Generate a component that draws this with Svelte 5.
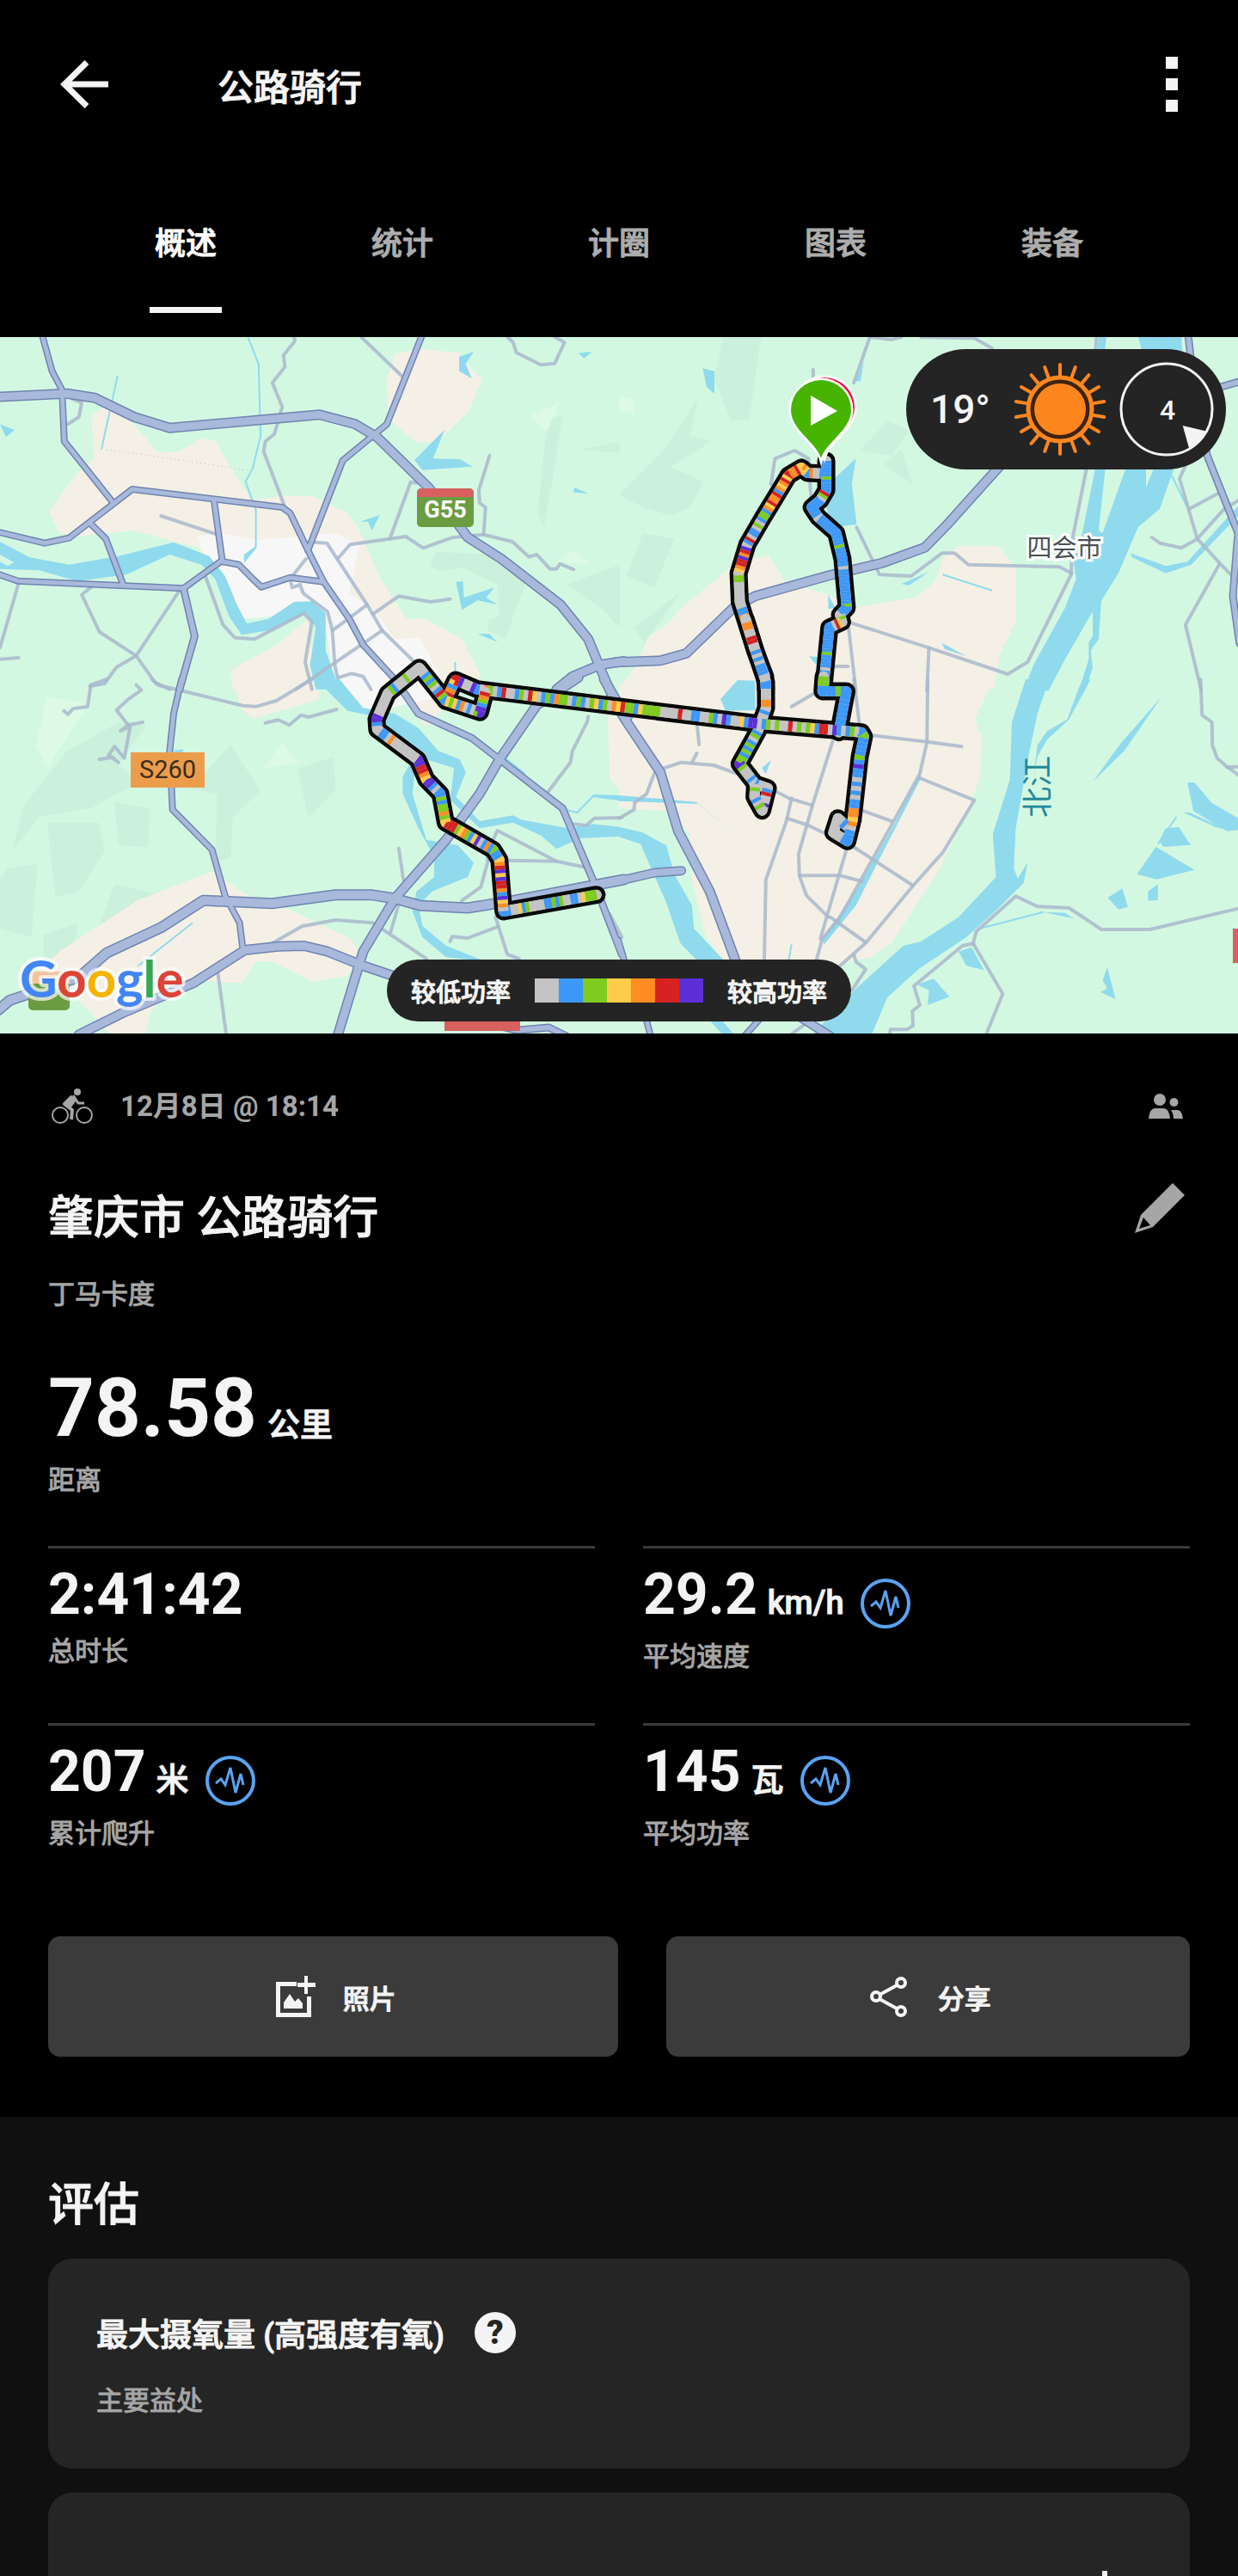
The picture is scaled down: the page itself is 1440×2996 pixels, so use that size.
<script lang="ts">
	type Line = { width: number; points: string };

	type Tile = {
		x: number;
		y: number;
		sand: string[];
		city: string[];
		shade: string[];
		light: string[];
		water: string[];
		streams: string[];
		minor: string[];
		major: Line[];
	};

	type Leg = { x: number; y: number; scale: number; points: string; mix: string };

	const palette = ['#c4c4c4', '#3c98f8', '#7ecc1e', '#ffcc4a', '#ff8d24', '#d62222', '#5c30d8'];

	const tabs = ['概述', '统计', '计圈', '图表', '装备'];
	let activeTab = $state('概述');

	const stats = [
		{ value: '2:41:42', unit: '', label: '总时长', sensor: false },
		{ value: '29.2', unit: 'km/h', label: '平均速度', sensor: true },
		{ value: '207', unit: '米', label: '累计爬升', sensor: true },
		{ value: '145', unit: '瓦', label: '平均功率', sensor: true }
	];

	const rays = Array.from({ length: 18 }, (_, i) => i * 20);

	// tile points are stored in tile units, 1568 across and three per map unit down
	const TILE_X = 720 / 1568;
	const TILE_Y = 1 / 3;

	const project = (points: string, x: number, y: number, scale = TILE_X) =>
		points
			.split(' ')
			.map((pair) => {
				const [px, py] = pair.split(',').map(Number);
				return `${(x + px * scale).toFixed(1)},${(y + py * TILE_Y).toFixed(1)}`;
			})
			.join(' ');

	const tiles: Tile[] = [
		{
			x: 0,
			y: -2,
			sand: [
				'1000,65 1060,48 1160,60 1220,155 1190,260 1110,370 1055,375 985,290 980,160',
				'232,280 270,245 340,310 395,405 450,408 510,360 545,370 620,540 640,575 720,560 790,560 880,620 910,680 960,840 1030,990 1080,990 1170,1060 1215,1180 1205,1235 860,1235 820,980 600,980 560,830 500,740 340,682 200,700 150,690 125,615 190,490 238,430',
				'583,1170 700,1080 780,990 800,1235 590,1235'
			],
			city: [
				'500,700 560,690 650,715 850,690 910,730 885,900 950,960 1000,1060 1065,1055 1110,1180 1110,1235 850,1235 820,980 780,930 740,935 690,980 610,990 590,890 560,820 520,790'
			],
			shade: [
				'1390,290 1425,280 1400,500 1378,670 1362,620 1375,430',
				'1470,400 1570,370 1570,410',
				'1105,755 1260,765 1330,870 1280,1060 1235,1030 1235,995 1265,980 1260,870 1170,810 1120,825 1090,805',
				'1435,870 1570,800 1570,1020 1530,960'
			],
			light: ['1340,280 1418,235 1385,335', '1410,790 1455,750 1500,800'],
			water: [
				'0,720 75,775 175,800 300,770 440,722 530,770 570,840 600,940 625,1005 680,990 745,930 790,928 825,970 825,1100 860,1235 800,1235 785,1150 800,1020 775,970 680,1030 612,1045 580,980 545,850 510,800 430,765 320,835 195,858 100,820 0,815 0,790 20,805 35,792 0,765',
				'1163,75 1200,57 1180,100 1195,150 1163,125',
				'1465,62 1500,57 1480,80',
				'1127,328 1097,430 1165,432 1197,458 1070,470 1050,435',
				'0,310 37,330 15,355',
				'1455,530 1490,552 1453,548',
				'912,650 962,627 942,682 932,650',
				'1155,860 1173,858 1175,915 1252,880 1232,915 1260,940 1210,925 1170,958',
				'1210,1042 1240,1042 1260,1070',
				'618,765 648,735 648,745 618,795'
			],
			streams: [
				'628,6 655,100 660,350 640,465 622,510 648,610 648,740',
				'298,140 257,398',
				'1153,1140 1153,1180'
			],
			minor: [
				'745,6 747,20 718,70 722,110 690,165 715,250 695,345 672,370 668,405 722,600',
				'915,6 1020,145',
				'1285,6 1300,25 1308,60 1370,103 1405,98 1430,25 1405,6',
				'180,220 207,235 200,285 172,310',
				'408,630 550,695',
				'1240,420 1213,540 1215,585 1230,600 1225,695',
				'1055,515 1040,512 988,708',
				'855,780 887,730 1028,702 1072,742 1145,706 1225,695 1298,720 1340,773 1360,765 1393,815 1410,815 1418,797 1453,817',
				'798,722 828,725 930,940 968,1030 1050,1140',
				'775,780 735,850 740,880 760,870 768,900 830,965 842,1030 848,1150 855,1195 890,1180 920,1190 940,1235',
				'842,1030 930,940',
				'750,1235 968,1030',
				'945,972 1010,910 1090,930 1140,920',
				'520,840 565,1010 595,1055 645,1060 770,970 790,1000 773,1140 790,1235',
				'230,880 207,905 252,1035 345,1118 455,890',
				'228,1225 265,1215 295,1158 345,1118 392,1210 430,1235',
				'47,865 0,1090',
				'0,1130 47,1125'
			],
			major: [
				{ width: 8, points: '107,0 132,125 157,190 163,370 287,585' },
				{ width: 8, points: '542,575 563,785' },
				{ width: 8, points: '228,655 268,710 312,870' },
				{ width: 8, points: '1069,0 980,310 868,437 780,750' },
				{
					width: 8,
					points:
						'-5,686 113,725 175,707 335,537 715,600 735,620 780,750 820,860 885,990 920,1080 1000,1200 1010,1235'
				},
				{
					width: 8,
					points: '-5,833 45,857 465,883 560,788 605,800 640,850 662,878 735,845 820,860'
				},
				{ width: 9, points: '465,883 493,1050 455,1235' },
				{
					width: 12,
					points:
						'-5,215 170,203 240,218 340,285 430,323 810,277 900,310 955,355 1085,530 1150,640 1185,705 1270,780 1420,940 1490,1060 1520,1160 1545,1240'
				},
				{ width: 12, points: '1410,1235 1450,1190 1520,1150 1580,1137' }
			]
		},
		{
			x: 720,
			y: -2,
			sand: [
				'0,1235 40,1160 75,1050 130,1000 150,960 300,790 380,768 420,860 520,900 600,950 750,915 800,860 820,780 860,735 960,735 1005,810 1005,1000 965,1110 950,1235'
			],
			city: [],
			shade: [
				'265,6 360,6 330,295 285,300 240,150',
				'0,555 120,390 200,215 180,350 235,370 130,460 215,510 180,600 130,630 60,600',
				'60,690 140,710 90,880 20,840',
				'610,400 680,300 735,330 690,420',
				'670,450 715,400 745,525',
				'40,1020 160,890 65,1075'
			],
			light: ['0,215 40,220 35,275 0,260'],
			water: [
				'1315,6 1425,6 1428,80 1330,80',
				'1215,6 1235,6 1228,80 1210,80',
				'1210,440 1234,440 1215,680 1225,690 1290,440 1335,440 1335,530 1362,440 1412,440 1370,605 1315,670 1265,830 1220,930 1195,975 1130,1130 1088,1240 1025,1240 1050,1150 1130,950 1158,850 1150,780 1172,700',
				'1295,760 1385,805 1440,790 1575,585 1575,620 1450,800 1385,830 1300,775',
				'1200,930 1222,920 1215,1060 1195,1100 1200,1160 1180,1240 1165,1240 1190,1130 1190,1070 1200,1050',
				'600,430 590,520 602,660 540,670 525,600 545,500',
				'212,115 242,125 242,205 222,180',
				'715,868 785,825 735,872',
				'530,905 548,950 530,955',
				'818,1073 880,1120 825,1095',
				'482,1120 530,1125 505,1160',
				'620,90 612,160 600,160',
				'300,1205 345,1215 345,1240 285,1235'
			],
			streams: ['1400,490 1440,600', '820,835 945,890'],
			minor: [
				'637,0 595,165',
				'637,6 690,15 715,6',
				'765,6 900,10 945,45',
				'1210,0 1185,460 1150,700 1145,830',
				'492,120 492,200',
				'385,520 395,430 445,402 480,430 485,540 490,590',
				'602,670 660,835 740,840 818,760 850,760 885,800 1115,808 1147,830 1035,1140 985,1182 785,1090 580,1000',
				'785,1090 780,1240',
				'580,1000 600,1240',
				'545,1155 580,1155',
				'1440,440 1420,500 1465,710 1525,800 1575,870',
				'1445,605 1520,550',
				'1350,705 1370,725 1425,742 1465,710 1530,610 1575,570',
				'1520,800 1435,1010 1475,1240'
			],
			major: [
				{
					width: 12,
					points:
						'-8,1141 105,1135 170,1110 290,950 345,910 540,835 665,795 775,740 835,655 975,440'
				},
				{ width: 9, points: '1442,0 1450,100 1490,420 1568,690 1555,910 1572,1075' },
				{ width: 9, points: '1500,190 1580,158' }
			]
		},
		{
			x: 0,
			y: 398,
			sand: [
				'590,0 800,0 810,70 640,138 610,100',
				'100,1020 150,950 350,770 540,670 620,750 720,795 890,905 910,960 880,1035 790,1055 690,985 650,985 610,1060 470,1050 380,1160 370,1240 280,1240 200,1120',
				'1020,0 1210,0 1160,60 1080,165 1040,100',
				'1540,130 1570,130 1570,390 1545,350'
			],
			city: ['850,0 1110,0 1090,70 1020,90 930,120 880,60'],
			shade: [
				'30,600 60,440 170,250 300,150 370,160 300,300 350,360 230,450 100,480',
				'120,500 250,500 265,600 200,740 140,760',
				'290,430 380,450 375,585 300,580',
				'585,230 660,390 590,480 585,620 545,640 550,400 480,380',
				'755,310 845,270 850,385 780,485',
				'20,660 95,645 80,900 0,870 0,700',
				'290,715 400,750 240,900',
				'110,890 200,850 185,940 110,1000'
			],
			light: ['120,60 225,85 120,310 90,230', '665,315 715,220 755,290'],
			water: [
				'800,0 860,0 920,100 1000,120 1060,170 1110,250 1165,280 1180,325 1155,410 1215,495 1300,475 1320,490 1440,520 1500,505 1570,515 1570,548 1470,555 1410,592 1370,545 1300,500 1215,520 1140,420 1150,310 1080,280 1050,330 1045,400 1080,560 1160,580 1200,640 1185,690 1095,740 1060,790 1070,860 1130,930 1230,985 1130,970 1070,900 1045,810 1055,740 1100,690 1100,620 1060,520 1020,400 1020,340 1040,290 960,180 950,130 880,110',
				'1500,402 1570,405 1570,424 1505,412',
				'440,248 465,245 455,275'
			],
			streams: ['1435,455 1462,466 1505,404', '488,850 350,1000', '1275,270 1330,330'],
			minor: [
				'270,0 230,20 222,95 185,103 172,122 162,110',
				'345,20 358,38 325,70 295,108 325,160 362,150',
				'325,160 305,180 330,165 315,275 290,235 275,265 300,290 285,272 252,280',
				'385,0 400,20 475,45 615,92 650,95 700,75 790,0',
				'672,152 705,142 733,160 762,125 782,132 853,105',
				'1490,130 1487,150 1450,250 1445,290 1387,395',
				'1010,590 1022,700',
				'1478,655 1410,635 1285,632',
				'1410,635 1260,528 1235,600 1235,640 1218,725 1170,772',
				'685,925 765,862 850,840 945,850 1080,975',
				'1015,760 990,880',
				'1140,915 1145,898 1185,903 1262,863',
				'1255,830 1285,960 1315,975',
				'552,1025 573,1240',
				'1450,505 1485,510 1505,485 1575,483',
				'1545,820 1575,900'
			],
			major: [
				{ width: 8, points: '460,0 440,120 430,250 437,455 537,595 570,755 607,850 615,940' },
				{ width: 9, points: '1000,0 1060,120 1195,205 1275,290 1425,450 1505,710 1575,960' },
				{ width: 13, points: '-5,1155 25,1120 200,1040 270,955 410,865 515,772 690,782 850,752 940,752 1000,765 1065,790 1185,798 1290,775 1580,699' },
				{ width: 12, points: '200,1240 310,1165 490,1060 620,945 705,932 770,930 830,950 920,1000 1050,1060' },
				{ width: 12, points: '1465,-6 1360,90 1265,280 1215,400 1130,560 1000,765 920,950 855,1245' },
				{ width: 12, points: '1530,0 1568,90 1590,130' },
				{ width: 9, points: '1200,1190 1310,1225 1390,1215 1435,1245' }
			]
		},
		{
			x: 720,
			y: 398,
			sand: [
				'0,20 40,0 950,0 900,140 918,200 915,340 880,470 800,690 690,920 640,970 560,990 540,1150 300,1150 265,980 220,900 185,700 180,540 130,460 0,450'
			],
			city: [],
			shade: [],
			light: [],
			water: [
				'1030,0 1090,0 1060,120 1040,250 1005,520 1000,660 1010,695 1035,640 1025,710 960,800 880,900 760,1010 680,1110 640,1240 490,1240 600,1080 720,930 765,915 860,830 955,690 947,540 990,350 995,150',
				'1175,0 1195,0 1140,140 1085,210 1060,270 1050,340 1060,230 1085,180 1135,140 1165,30',
				'0,515 60,535 120,580 140,680 185,790 190,870 265,980 200,985 155,920 120,780 75,640 55,575 0,550',
				'230,1190 260,1190 292,1240 262,1240',
				'0,405 195,428 335,580 200,435 0,425',
				'300,3 345,5 345,108 270,110 257,70',
				'362,310 385,282 372,330',
				'762,330 765,345 655,640 600,790 520,925 515,905 600,740 700,500',
				'1375,60 1280,250 1200,358 1270,225',
				'1440,360 1458,360 1500,430 1575,490 1575,525 1540,530 1455,460',
				'1430,465 1445,465 1540,525 1510,515',
				'1385,520 1418,516 1448,578 1380,585 1368,565',
				'1360,585 1458,665 1362,698 1312,680',
				'1275,730 1289,795 1265,803 1238,762',
				'1365,715 1365,770 1340,773 1340,740',
				'1075,812 1130,815 1152,835',
				'860,950 893,935 925,1015 880,1000',
				'755,1065 797,1045 837,1108 782,1137 785,1085',
				'1237,1005 1258,1117 1220,1092 1237,1078 1225,1050'
			],
			streams: ['920,868 1075,812', '1412,480 1365,575', '437,925 430,980'],
			minor: [
				'595,0 612,190',
				'782,0 780,220 762,330 690,510 560,830 515,905 500,980',
				'635,195 780,218 868,235',
				'500,45 437,95',
				'762,345 900,422 820,605 745,720 625,920 560,1000',
				'600,590 745,720',
				'545,200 490,440 455,610 457,685 475,755 530,830',
				'457,685 560,685 615,705',
				'575,600 510,905',
				'535,830 625,918',
				'198,160 203,228',
				'197,258 185,290',
				'0,485 38,455 40,430 70,400 92,320 158,290 240,300 340,350 430,415 490,440',
				'437,415 425,490 372,700 368,980',
				'425,485 480,510 600,590',
				'610,455 690,495',
				'1473,0 1477,125 1502,150 1503,230 1515,275 1540,305 1575,340',
				'1540,307 1575,305',
				'1575,798 1345,873 1222,873 1140,798 1060,793 1005,757 905,880 897,922 972,1097 930,1240',
				'897,922 870,930 747,1070 762,1137 743,1158 745,1208 730,1222 688,1222 685,1240',
				'595,960 600,985 625,1012 590,1085',
				'475,1200 435,1240'
			],
			major: [
				{ width: 12, points: '-20,60 20,150 105,325 150,530 230,740 300,1000' },
				{ width: 11, points: '-20,710 90,675 158,668' },
				{ width: 8, points: '-2,910 12,975' },
				{ width: 8, points: '68,1180 80,1245' },
				{ width: 8, points: '360,1180 318,1245' },
				{ width: 11, points: '460,1180 535,1245' }
			]
		}
	];

	const VIEW_X = 640 / 1568;

	const legs: Leg[] = [
		{
			x: 720,
			y: -2,
			scale: TILE_X,
			points: '516,482 478,480 462,462 430,488 405,545 365,635 325,730 303,830 306,930 345,1100 370,1190 372,1235',
			mix: '1004134354453543415445341221020110510654655430220000000011441003005105500110101011'
		},
		{
			x: 720,
			y: -2,
			scale: TILE_X,
			points: '525,438 525,540 510,575 488,600 505,635 550,690 566,780 577,950 560,975 565,1000 533,1020 520,1200 518,1235',
			mix: '1111121111520111111101111111111121111110111111111112111020350111111111211110111222'
		},
		{
			x: 400,
			y: 328,
			scale: VIEW_X,
			points: '1367,200 1364,252 1432,252 1410,395',
			mix: '22111121111111116'
		},
		{
			x: 400,
			y: 328,
			scale: VIEW_X,
			points: '1145,0 1170,100 1203,220 1203,310 1180,390 1128,505 1172,575 1208,590 1192,668 1170,620 1172,575',
			mix: '0440055001010111001100044010010012012121226200010100015006002010020'
		},
		{
			x: 400,
			y: 328,
			scale: VIEW_X,
			points: '290,285 318,213 380,245 1180,365 1475,395 1482,410 1470,480 1450,700 1435,775 1395,745 1408,695 1430,720',
			mix: '354135600610420150012053012142201210231204352213222200005001100210610031660120200502023155061012012111121611010101144340111100000001'
		},
		{
			x: 400,
			y: 328,
			scale: VIEW_X,
			points: '720,962 455,1020 443,840 425,805 290,710 275,610 235,560 210,490 95,385 93,350 125,260 215,170 290,285 388,325 403,255',
			mix: '222301100212110000213001104361455636543112141063124325553242212110166345566000000004011001660000000210002000000121201521323140102661245'
		}
	];
</script>

<main class="page">
	<header class="header">
		<div class="header__bar">
			<button class="icon-button" aria-label="返回">
				<svg width="56" height="56" viewBox="0 0 56 56" fill="none" stroke="currentColor" stroke-width="7">
					<path d="M56 28H6M31 2.500L5 28l26 25.500" />
				</svg>
			</button>
			<h1 class="header__title">公路骑行</h1>
			<button class="icon-button" aria-label="更多">
				<svg width="14" height="64" viewBox="0 0 14 64" fill="currentColor">
					<path d="M0 0h14v14H0zM0 25h14v14H0zM0 50h14v14H0z" />
				</svg>
			</button>
		</div>
		<nav class="tabs">
			{#each tabs as tab}
				<button class="tabs__item" class:tabs__item--active={tab === activeTab} onclick={() => (activeTab = tab)}>
					{tab}
				</button>
			{/each}
		</nav>
	</header>

	<section class="map">
		<svg class="map__canvas" viewBox="0 0 1440 810" role="img" aria-label="路线地图">
			<rect width="1440" height="810" fill="#d3f8e2" />
			{#each tiles as tile}
				{#each tile.shade as points}<polygon class="shade" points={project(points, tile.x, tile.y)} />{/each}
				{#each tile.light as points}<polygon class="light" points={project(points, tile.x, tile.y)} />{/each}
				{#each tile.sand as points}<polygon class="sand" points={project(points, tile.x, tile.y)} />{/each}
			{/each}
			{#each tiles as tile}
				{#each tile.city as points}<polygon class="city" points={project(points, tile.x, tile.y)} />{/each}
			{/each}
			{#each tiles as tile}
				{#each tile.water as points}<polygon class="water" points={project(points, tile.x, tile.y)} />{/each}
				{#each tile.streams as points}<polyline class="stream" points={project(points, tile.x, tile.y)} />{/each}
			{/each}
			<polyline class="border" points={project('270,400 410,425 630,472', 0, -2)} />
			{#each tiles as tile}
				{#each tile.minor as points}<polyline class="minor" points={project(points, tile.x, tile.y)} />{/each}
			{/each}
			{#each tiles as tile}
				{#each tile.major as road}
					<polyline class="casing" stroke-width={road.width} points={project(road.points, tile.x, tile.y)} />
				{/each}
			{/each}
			{#each tiles as tile}
				{#each tile.major as road}
					<polyline class="major" stroke-width={road.width - 3} points={project(road.points, tile.x, tile.y)} />
				{/each}
			{/each}

			<rect x="485" y="176" width="66" height="45" rx="5" fill="#6b9c41" />
			<path d="M485 186v-5a5 5 0 0 1 5-5h56a5 5 0 0 1 5 5v5z" fill="#d8605f" />
			<text class="badge badge--light" x="518" y="210">G55</text>
			<rect x="152" y="483" width="86" height="41" fill="#ec9d4c" />
			<text class="badge" x="195" y="513">S260</text>
			<rect x="33" y="738" width="48" height="45" rx="5" fill="#6b9c41" />
			<path d="M33 752v-9a5 5 0 0 1 5-5h38a5 5 0 0 1 5 5v9z" fill="#f3c39e" />
			<rect x="517" y="780" width="88" height="27" fill="#d8605f" />
			<rect x="1434" y="688" width="10" height="40" fill="#d8605f" />
			<text class="place" x="1238" y="256">四会市</text>
			<text class="river" transform="translate(1220 523) rotate(-90)">北江</text>

			{#each legs as leg}
				<polyline class="route-edge" points={project(leg.points, leg.x, leg.y, leg.scale)} />
			{/each}
			{#each legs as leg}
				{@const points = project(leg.points, leg.x, leg.y, leg.scale)}
				<polyline class="route" stroke={palette[0]} {points} />
				{#each leg.mix as power, i}
					<polyline
						class="route-step"
						stroke={palette[Number(power)]}
						pathLength={leg.mix.length}
						stroke-dasharray="1 {leg.mix.length * 2}"
						stroke-dashoffset={-i}
						{points}
					/>
				{/each}
			{/each}

			<g stroke="#fff" stroke-width="5" paint-order="stroke">
				<path d="M959 138c-5-17-35-32-35-56a35 35 0 0 1 70 0c0 24-30 39-35 56z" fill="#e8113a" />
				<path d="M955 141c-5-18-35-33-35-56a35 35 0 0 1 70 0c0 23-30 38-35 56z" fill="#46b400" />
			</g>
			<path d="M943 68v35l31-17z" fill="#fff" />

			<text class="google" x="23" y="768"
				><tspan fill="#4285f4">G</tspan><tspan fill="#db4437">o</tspan><tspan fill="#f4b400">o</tspan><tspan
					fill="#4285f4">g</tspan
				><tspan fill="#34a853">l</tspan><tspan fill="#db4437">e</tspan></text
			>
		</svg>

		<div class="weather">
			<span class="weather__temp">19°</span>
			<svg width="110" height="110" viewBox="-55 -55 110 110" fill="none" stroke="#ff861e">
				<circle r="32" stroke="#3d2410" stroke-width="5" />
				<circle r="30" fill="#ff861e" stroke="none" />
				<circle r="37" stroke-width="5" />
				{#each rays as angle}
					<path d="M0-38v-14" stroke-width="4" stroke-linecap="round" transform="rotate({angle})" />
				{/each}
			</svg>
			<svg width="110" height="110" viewBox="-55 -55 110 110">
				<circle r="53" fill="none" stroke="#f4f4f4" stroke-width="3" />
				<path d="M18.700 19L46 25.500A53 53 0 0 1 26 45z" fill="#f4f4f4" />
				<text class="weather__wind" x="1" y="12">4</text>
			</svg>
		</div>

		<div class="legend">
			<span>较低功率</span>
			<div class="legend__scale">
				{#each palette as color}
					<i style="background: {color}"></i>
				{/each}
			</div>
			<span>较高功率</span>
		</div>
	</section>

	<section class="summary">
		<div class="meta">
			<svg width="56" height="48" viewBox="0 0 56 48" fill="none" stroke="currentColor">
				<circle cx="14" cy="34" r="9" stroke-width="2" />
				<circle cx="42" cy="34" r="9" stroke-width="2" />
				<circle cx="34" cy="7" r="4" fill="currentColor" stroke="none" />
				<path d="M28 12l-9 9 9 7-1 11" stroke-width="4" stroke-linejoin="round" />
				<path d="M29 11l6 9h7" stroke-width="3" stroke-linejoin="round" />
				<path d="M30 12l-11 10 7 4 6-8z" fill="currentColor" stroke="none" />
			</svg>
			<time class="meta__date">12月8日 @ 18:14</time>
			<svg class="meta__people" width="40" height="30" viewBox="0 0 40 30" fill="currentColor">
				<circle cx="13" cy="7" r="7" />
				<path d="M0 29c1-8 3-12 8-12h9c5 0 7 4 8 12z" />
				<circle cx="29.500" cy="10" r="5" />
				<path d="M26 19h7c4 0 6 3 7 10H29c0-4-1-7-3-10z" />
			</svg>
		</div>

		<div class="title">
			<h2 class="title__text">肇庆市 公路骑行</h2>
			<button class="icon-button title__edit" aria-label="编辑">
				<svg width="58" height="58" viewBox="0 0 58 58" fill="currentColor" fill-rule="evenodd">
					<path d="M44 0l14 14-37 37L0 58l7-21zM10 40L5 53l13-4z" />
				</svg>
			</button>
		</div>
		<p class="author">丁马卡度</p>

		<div class="distance">
			<p class="value value--large">78.58<small>公里</small></p>
			<p class="label">距离</p>
		</div>

		<div class="stats">
			{#each stats as stat}
				<div class="stats__item">
					<div class="stats__row">
						<p class="value">
							{stat.value}{#if stat.unit}<small>{stat.unit}</small>{/if}
						</p>
						{#if stat.sensor}
							<svg class="stats__icon" width="58" height="58" viewBox="0 0 58 58" fill="none" stroke="#5aa3f2">
								<circle cx="29" cy="29" r="27" stroke-width="4" />
								<path d="M12 32l6-5 5 7 6-20 6 29 6-22 3 13" stroke-width="3" />
							</svg>
						{/if}
					</div>
					<p class="label">{stat.label}</p>
				</div>
			{/each}
		</div>

		<div class="actions">
			<button class="actions__button actions__button--wide">
				<svg width="56" height="56" viewBox="0 0 56 56" fill="currentColor">
					<path d="M6 11h24v5H11v31h31V28h5v24H6z" />
					<path d="M39 4h4v8h9v5h-9v8h-4v-8h-8v-5h8z" />
					<path d="M15 42V35l7-10 6 9 4-4 5 6v6z" />
				</svg>
				照片
			</button>
			<button class="actions__button">
				<svg width="56" height="56" viewBox="0 0 56 56" fill="none" stroke="currentColor" stroke-width="4">
					<path d="M16 26L38 14M16 31l22 12" />
					<circle cx="12" cy="28" r="5" />
					<circle cx="41" cy="12" r="5" />
					<circle cx="41" cy="45" r="5" />
				</svg>
				分享
			</button>
		</div>
	</section>

	<section class="review">
		<h2 class="review__title">评估</h2>
		<article class="card">
			<div class="card__head">
				<h3 class="card__title">最大摄氧量 (高强度有氧)</h3>
				<button class="card__help" aria-label="帮助">?</button>
			</div>
			<p class="card__note">主要益处</p>
		</article>
		<article class="card card--next">
			<svg width="6" height="6" viewBox="0 0 6 6"><rect width="6" height="6" fill="#f4f4f4" /></svg>
		</article>
	</section>
</main>

<style>
	:global(body) {
		background: #101010;
	}
	.page {
		overflow: hidden;
		background: #000;
		color: #f4f4f4;
		font-family: Roboto, 'Noto Sans CJK SC', sans-serif;
	}
	h1,
	h2,
	h3,
	p {
		margin: 0;
	}
	svg {
		flex: none;
	}
	button {
		font: inherit;
		color: inherit;
		border: 0;
		cursor: pointer;
	}
	.header__title,
	.tabs__item,
	.title__text,
	.review__title,
	.card__title,
	.legend,
	.actions__button,
	.value small {
		-webkit-text-stroke: 1px currentColor;
	}
	.icon-button {
		display: flex;
		padding: 0;
		background: none;
	}
	.header {
		padding-bottom: 28px;
	}
	.header__bar {
		display: flex;
		align-items: center;
		height: 196px;
		padding: 0 70px;
	}
	.header__title {
		flex: 1;
		margin-left: 127px;
		padding-top: 10px;
		font-size: 42px;
		font-weight: 500;
		line-height: 60px;
	}
	.tabs {
		display: grid;
		grid-template-columns: repeat(5, 1fr);
		justify-items: center;
		padding: 0 90px;
	}
	.tabs__item {
		height: 168px;
		padding: 7px 6px 0;
		background: none;
		border-bottom: 7px solid transparent;
		color: #adadad;
		font-size: 36px;
		font-weight: 500;
	}
	.tabs__item--active {
		border-color: #f4f4f4;
		color: #fff;
	}
	.map {
		position: relative;
	}
	.map__canvas {
		display: block;
		width: 100%;
		height: auto;
	}
	.shade {
		fill: #cbf0dc;
	}
	.light {
		fill: #dcfae4;
	}
	.sand {
		fill: #f5f0e5;
	}
	.city {
		fill: #f7f7f7;
	}
	.water {
		fill: #90daee;
	}
	polyline {
		fill: none;
	}
	.stream {
		stroke: #90daee;
		stroke-width: 2;
	}
	.border {
		stroke: #b9b9b9;
		stroke-dasharray: 1 4;
	}
	.minor {
		stroke: #a9b8cc;
		stroke-width: 4;
		stroke-linecap: round;
		stroke-linejoin: round;
		opacity: 0.85;
	}
	.casing {
		stroke: #6f84b0;
		stroke-linecap: round;
		stroke-linejoin: round;
	}
	.major {
		stroke: #a8b9dc;
		stroke-linecap: round;
		stroke-linejoin: round;
	}
	.route-edge {
		stroke: #0a0a0a;
		stroke-width: 21;
		stroke-linecap: round;
		stroke-linejoin: round;
	}
	.route {
		stroke-width: 12;
		stroke-linecap: round;
		stroke-linejoin: round;
	}
	.route-step {
		stroke-width: 12;
		stroke-linejoin: round;
	}
	.badge {
		fill: #3b2c1a;
		font-size: 29px;
		text-anchor: middle;
	}
	.badge--light {
		fill: #fff;
		font-size: 27px;
		font-weight: 700;
	}
	.place {
		fill: #4a5054;
		stroke: #fff;
		stroke-width: 6;
		paint-order: stroke;
		font-size: 29px;
		text-anchor: middle;
	}
	.river {
		fill: #1f8a99;
		font-size: 36px;
		text-anchor: middle;
	}
	.google {
		font-family: Lato, sans-serif;
		font-size: 60px;
		font-weight: 700;
		stroke: rgb(255 255 255 / 0.7);
		stroke-width: 8;
		stroke-linejoin: round;
		paint-order: stroke;
	}
	.weather {
		position: absolute;
		top: 14px;
		right: 14px;
		display: flex;
		align-items: center;
		gap: 14px;
		height: 140px;
		padding: 0 14px 0 28px;
		border-radius: 70px;
		background: #242424;
	}
	.weather__temp {
		width: 82px;
		font-size: 46px;
		font-weight: 500;
	}
	.weather__wind {
		fill: #f4f4f4;
		font-size: 32px;
		font-weight: 500;
		text-anchor: middle;
	}
	.legend {
		position: absolute;
		bottom: 14px;
		left: 50%;
		display: flex;
		align-items: center;
		gap: 28px;
		height: 72px;
		padding: 0 28px;
		border-radius: 36px;
		background: #242424;
		font-size: 29px;
		font-weight: 500;
		white-space: nowrap;
		translate: -50% 0;
	}
	.legend__scale {
		display: flex;
	}
	.legend__scale i {
		width: 28px;
		height: 28px;
	}
	.summary {
		padding: 56px 56px 70px;
	}
	.meta {
		display: flex;
		align-items: center;
		height: 58px;
		color: #a6a6a6;
	}
	.meta__date {
		flex: 1;
		margin-left: 28px;
		font-size: 33px;
		font-weight: 700;
		line-height: 40px;
	}
	.meta__people {
		margin-right: 8px;
	}
	.title {
		display: flex;
		justify-content: space-between;
		margin-top: 60px;
	}
	.title__text {
		padding-top: 3px;
		font-size: 53px;
		font-weight: 500;
		line-height: 76px;
	}
	.title__edit {
		align-self: flex-start;
		margin-right: 6px;
		color: #a6a6a6;
	}
	.author,
	.label,
	.card__note {
		color: #a6a6a6;
		font-size: 31px;
		line-height: 44px;
		-webkit-text-stroke: 1px currentColor;
	}
	.author {
		margin-top: 29px;
	}
	.distance {
		margin: 60px 0 54px;
	}
	.value {
		display: flex;
		align-items: baseline;
		gap: 12px;
		height: 72px;
		font-size: 66px;
		font-weight: 700;
		line-height: 72px;
	}
	.value--large {
		height: 100px;
		margin-bottom: 12px;
		font-size: 94px;
		line-height: 100px;
	}
	.value small {
		font-size: 38px;
		font-weight: 500;
		line-height: 44px;
	}
	.stats {
		display: grid;
		grid-template-columns: 1fr 1fr;
		gap: 55px 56px;
	}
	.stats__item {
		padding-top: 18px;
		border-top: 3px solid #3a3a3a;
	}
	.stats__row {
		display: flex;
		gap: 19px;
		margin-bottom: 8px;
	}
	.stats__icon {
		margin: 17px 0 3px;
	}
	.actions {
		display: flex;
		gap: 56px;
		margin-top: 97px;
	}
	.actions__button {
		flex: 608;
		display: flex;
		align-items: center;
		justify-content: center;
		gap: 28px;
		height: 140px;
		border-radius: 14px;
		background: #3b3b3b;
		font-size: 31px;
		font-weight: 500;
	}
	.actions__button--wide {
		flex: 664;
	}
	.review {
		padding: 65px 56px 0;
		background: #101010;
	}
	.review__title {
		margin-bottom: 24px;
		font-size: 53px;
		font-weight: 500;
		line-height: 76px;
	}
	.card {
		box-sizing: border-box;
		min-height: 244px;
		margin-bottom: 28px;
		padding: 56px;
		border-radius: 28px;
		background: #252525;
	}
	.card__head {
		display: flex;
		align-items: center;
		gap: 35px;
		height: 60px;
	}
	.card__title {
		font-size: 37px;
		font-weight: 500;
	}
	.card__help {
		width: 48px;
		height: 48px;
		padding: 0;
		border-radius: 50%;
		background: #f4f4f4;
		color: #252525;
		font-size: 38px;
		font-weight: 900;
		line-height: 48px;
	}
	.card__note {
		margin-top: 28px;
	}
	.card--next {
		display: flex;
		justify-content: flex-end;
		min-height: 0;
		margin-bottom: 0;
		padding: 91px 96px 0;
		border-radius: 28px 28px 0 0;
	}
</style>
